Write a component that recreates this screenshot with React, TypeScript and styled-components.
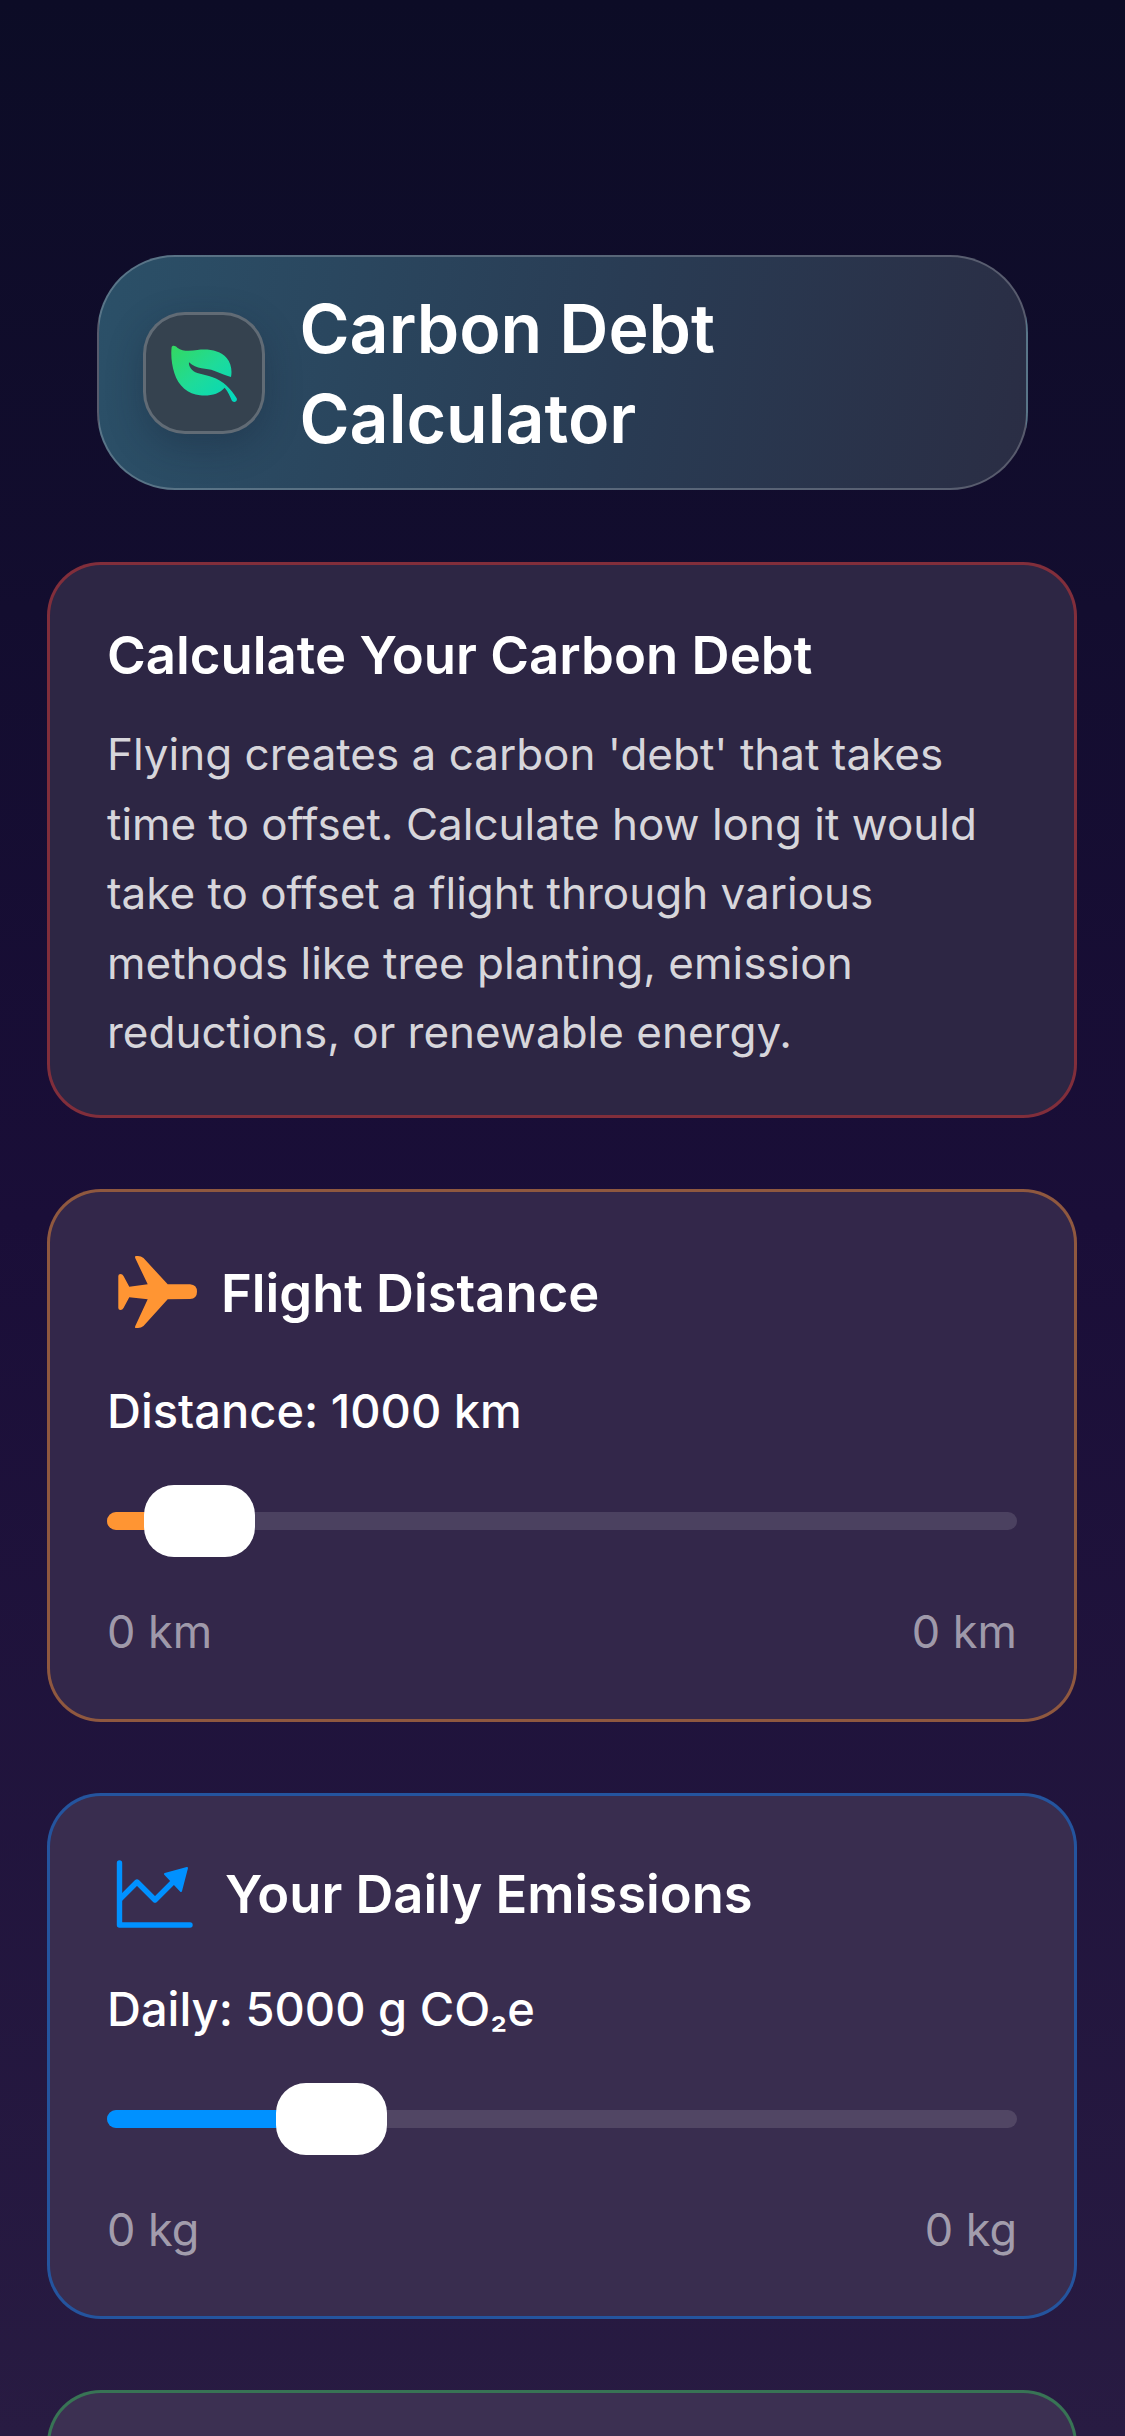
import React from "react";
import styled, { createGlobalStyle } from "styled-components";

const Global = createGlobalStyle`
  html, body { margin: 0; padding: 0; height: 2436px; overflow: hidden; background: #0c0c26; }
  #root { height: 2436px; }
  * { box-sizing: border-box; }
`;

const Page = styled.main`
  height: 2436px;
  overflow: hidden;
  padding: 255px 48px 0 47px;
  display: flex;
  flex-direction: column;
  gap: 71px;
  font-family: Inter, "Liberation Sans", sans-serif;
  color: #fff;
  background: linear-gradient(180deg, #0c0c26 0%, #1a0e38 50%, #281b42 100%);
`;

const Header = styled.header`
  align-self: center;
  width: 931px;
  height: 235px;
  flex: none;
  margin-bottom: 1px;
  display: flex;
  align-items: center;
  gap: 35px;
  padding: 0 44px;
  border: 2px solid rgba(255, 255, 255, 0.22);
  border-radius: 78px;
  background: linear-gradient(100deg, #2b5068 0%, #293c54 55%, #2a2d44 100%);
`;

const LogoBox = styled.div`
  width: 122px;
  height: 122px;
  flex: none;
  display: flex;
  align-items: center;
  justify-content: center;
  border: 3px solid rgba(255, 255, 255, 0.22);
  border-radius: 42px;
  background: #35424f;
  box-shadow: 0 12px 36px rgba(20, 30, 50, 0.3);
`;

const AppTitle = styled.h1`
  margin: 0;
  font-size: 68px;
  line-height: 90px;
  font-weight: 600;
  letter-spacing: 0;
  width: 600px;
`;

const Card = styled.section<{ $border: string; $height: number; $tint: string }>`
  flex: none;
  height: ${(p) => p.$height}px;
  padding: 0 57px;
  border: 3px solid ${(p) => p.$border};
  border-radius: 54px;
  background: ${(p) => p.$tint};
`;

const IntroTitle = styled.h2`
  margin: 0;
  padding-top: 57px;
  font-size: 52.7px;
  line-height: 66px;
  font-weight: 600;
`;

const IntroBody = styled.p`
  margin: 32px 0 0;
  font-size: 44px;
  line-height: 69.6px;
  font-weight: 400;
  color: rgba(255, 255, 255, 0.82);
`;

const CardHead = styled.div`
  margin-top: 56px;
  display: flex;
  align-items: center;
  gap: 24px;
`;

const CardTitle = styled.h3`
  margin: 0;
  font-size: 52.5px;
  line-height: 72px;
  font-weight: 600;
`;

const Label = styled.div`
  margin-top: 46px;
  font-size: 47px;
  line-height: 54px;
  font-weight: 500;
`;

const SubDigit = styled.span`
  font-size: 38px;
  line-height: 0;
`;

const Slider = styled.div`
  position: relative;
  height: 18px;
  margin-top: 74px;
  border-radius: 9px;
  background: rgba(255, 255, 255, 0.12);
`;

const Fill = styled.div<{ $color: string }>`
  height: 100%;
  border-radius: 9px;
  background: ${(p) => p.$color};
`;

const Thumb = styled.div`
  position: absolute;
  top: -27px;
  width: 111px;
  height: 72px;
  border-radius: 30px;
  background: #fff;
`;

const Range = styled.div`
  display: flex;
  justify-content: space-between;
  margin-top: 75px;
  font-size: 45px;
  line-height: 54px;
  color: rgba(255, 255, 255, 0.55);
`;

const PlaneSvg = styled.svg`
  width: 90px;
  height: 90px;
  flex: none;
`;

const ChartSvg = styled.svg`
  width: 94px;
  height: 84px;
  flex: none;
`;

function PlaneIcon() {
  return (
    <PlaneSvg viewBox="-3 0 90 90">
      <path
        fill="#ff9533"
        d="M57.7 36.3 H80 Q87 36.8 87 43.7 Q87 50.5 80 51 L57.7 51.3 L33.5 78 Q31 80 28 80 H26 Q24.5 80 25.3 78 L37.7 51.3 L19.3 49.3 L13.5 60 Q12.5 62 10.5 62 Q8.3 62 8.3 60 V28 Q8.3 26 10.5 26 Q12.5 26 13.5 28 L19.3 38.7 L37.7 36.3 L25.3 10.3 Q24.5 8 26 8 H28 Q31 8 33.5 10 Z"
      />
    </PlaneSvg>
  );
}

function ChartIcon() {
  return (
    <ChartSvg viewBox="0 0 94 84">
      <path d="M12.5 11 V73 H83" fill="none" stroke="#0091ff" strokeWidth="5.4" strokeLinecap="round" strokeLinejoin="round" />
      <path d="M13 47 L30 30 L48 48 L68 28" fill="none" stroke="#0091ff" strokeWidth="5.4" strokeLinejoin="round" />
      <path d="M58 22 L80 16 L74 39 Z" fill="#0091ff" stroke="#0091ff" strokeWidth="2" strokeLinejoin="round" />
    </ChartSvg>
  );
}

function LeafIcon() {
  return (
    <svg width="68" height="60" viewBox="150 160 204 180">
      <defs>
        <linearGradient id="leaf" x1="0" y1="0" x2="1" y2="1">
          <stop offset="0" stopColor="#34d860" />
          <stop offset="0.5" stopColor="#1edb9a" />
          <stop offset="1" stopColor="#00d8c0" />
        </linearGradient>
      </defs>
      <path
        fill="url(#leaf)"
        d="M155 172 C158 166 166 168 172 174 C188 186 210 184 232 181 C265 177 300 182 320 205 C333 220 337 242 333 262 C318 258 300 250 282 243 C262 236 228 240 207 218 C205 228 214 244 232 250 C262 258 296 264 320 288 C332 300 342 312 350 326 C354 336 340 341 335 332 C330 320 324 305 314 294 C298 312 272 320 240 317 C205 313 175 290 163 250 C155 225 152 195 155 172 Z"
      />
    </svg>
  );
}

type SliderCardProps = {
  border: string;
  tint: string;
  height: number;
  icon: React.ReactNode;
  title: string;
  label: React.ReactNode;
  color: string;
  fill: number;
  thumb: number;
  min: string;
  max: string;
};

function SliderCard(p: SliderCardProps) {
  return (
    <Card $border={p.border} $height={p.height} $tint={p.tint}>
      <CardHead>
        {p.icon}
        <CardTitle>{p.title}</CardTitle>
      </CardHead>
      <Label>{p.label}</Label>
      <Slider>
        <Fill $color={p.color} style={{ width: p.fill }} />
        <Thumb style={{ left: p.thumb }} />
      </Slider>
      <Range>
        <span>{p.min}</span>
        <span>{p.max}</span>
      </Range>
    </Card>
  );
}

export default function App() {
  return (
    <Page>
      <Global />
      <Header>
        <LogoBox>
          <LeafIcon />
        </LogoBox>
        <AppTitle>Carbon Debt Calculator</AppTitle>
      </Header>
      <Card $border="rgba(255, 59, 48, 0.4)" $height={556} $tint="#2d2644">
        <IntroTitle>Calculate Your Carbon Debt</IntroTitle>
        <IntroBody>
          Flying creates a carbon 'debt' that takes time to offset. Calculate how long it would take to offset a flight through various methods like tree planting, emission reductions, or renewable energy.
        </IntroBody>
      </Card>
      <SliderCard
        border="rgba(255, 149, 51, 0.45)"
        tint="#33274a"
        height={533}
        icon={<PlaneIcon />}
        title="Flight Distance"
        label="Distance: 1000 km"
        color="#ff9533"
        fill={50}
        thumb={37}
        min="0 km"
        max="0 km"
      />
      <SliderCard
        border="rgba(10, 132, 255, 0.45)"
        tint="#392d4f"
        height={526}
        icon={<ChartIcon />}
        title="Your Daily Emissions"
        label={
          <>
            Daily: 5000 g CO<SubDigit>₂</SubDigit>e
          </>
        }
        color="#0091ff"
        fill={180}
        thumb={169}
        min="0 kg"
        max="0 kg"
      />
      <Card $border="rgba(52, 199, 89, 0.45)" $height={300} $tint="#3c3052" />
    </Page>
  );
}
